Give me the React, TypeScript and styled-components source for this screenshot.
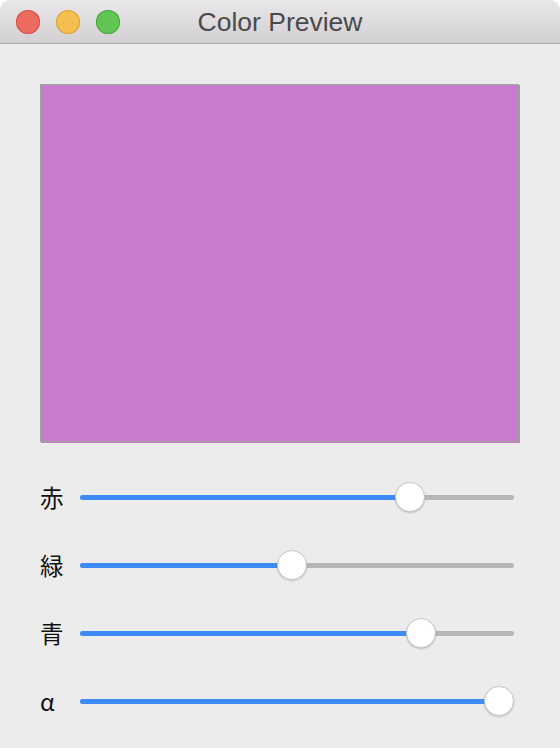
import React from "react";
import styled, { createGlobalStyle } from "styled-components";

const Global = createGlobalStyle`
  html, body { margin: 0; padding: 0; background: #ffffff; }
  body { font-family: "Liberation Sans", "Noto Sans CJK JP", sans-serif; }
`;

const Window = styled.div`
  width: 560px;
  height: 748px;
  display: flex;
  flex-direction: column;
  background: #ececec;
  border-radius: 10px 10px 0 0;
  overflow: hidden;
`;

const TitleBar = styled.div`
  height: 43px;
  flex: none;
  display: flex;
  align-items: center;
  position: relative;
  background: linear-gradient(#e9e7e9, #d2d0d2);
  border-bottom: 1px solid #ababab;
`;

const Lights = styled.div`
  display: flex;
  gap: 16px;
  padding-left: 16px;
  padding-top: 1px;
`;

const Light = styled.span<{ $fill: string; $edge: string }>`
  width: 24px;
  height: 24px;
  border-radius: 50%;
  background: ${(p) => p.$fill};
  box-shadow: inset 0 0 0 1px ${(p) => p.$edge};
`;

const Title = styled.div`
  position: absolute;
  left: 0;
  right: 0;
  top: 0;
  bottom: 0;
  display: flex;
  align-items: center;
  justify-content: center;
  padding-top: 1px;
  font-family: "Liberation Sans", sans-serif;
  font-size: 26.5px;
  color: #4a4a4a;
  pointer-events: none;
`;

const Content = styled.div`
  flex: 1;
  display: flex;
  flex-direction: column;
  padding: 40px 40px 0 40px;
`;

const Preview = styled.div<{ $color: string }>`
  height: 358px;
  box-sizing: border-box;
  width: 479px;
  background: ${(p) => p.$color};
  border: 1px solid #a3a3a3;
  box-shadow: 1px 1px 0 ${(p) => p.$color};
  margin-bottom: 21px;
`;

const Row = styled.div`
  height: 68px;
  display: flex;
  align-items: center;
  padding-right: 6px;
`;

const Label = styled.div`
  width: 40px;
  flex: none;
  font-family: "Noto Sans CJK JP", "Liberation Sans", sans-serif;
  font-size: 23.5px;
  color: #111;
  line-height: 1;
  padding-top: 2px;
`;

const Track = styled.div`
  flex: 1;
  height: 5px;
  border-radius: 3px;
  background: #b6b6b6;
  position: relative;
`;

const Fill = styled.div`
  position: absolute;
  left: 0;
  top: 0;
  bottom: 0;
  border-radius: 3px;
  background: #3c8bf6;
`;

const Thumb = styled.div`
  position: absolute;
  top: 50%;
  width: 30px;
  height: 30px;
  margin-left: -15px;
  margin-top: -15px;
  border-radius: 50%;
  background: #ffffff;
  box-sizing: border-box;
  border: 1px solid #c9c9c9;
  box-shadow: 0 1px 2px rgba(0, 0, 0, 0.2);
`;

const TRACK_W = 434;

function Slider({ label, value }: { label: string; value: number }) {
  const center = 15 + value * (TRACK_W - 30);
  return (
    <Row>
      <Label>{label}</Label>
      <Track>
        <Fill style={{ width: center }} />
        <Thumb style={{ left: center }} />
      </Track>
    </Row>
  );
}

export default function App() {
  const r = 199, g = 123, b = 204;
  const color = `rgb(${r}, ${g}, ${b})`;
  return (
    <>
      <Global />
      <Window>
        <TitleBar>
          <Lights>
            <Light $fill="#ec6a5e" $edge="#d25347" />
            <Light $fill="#f5bf4f" $edge="#d6a23b" />
            <Light $fill="#61c554" $edge="#4aa73d" />
          </Lights>
          <Title>Color Preview</Title>
        </TitleBar>
        <Content>
          <Preview $color={color} />
          <Slider label="赤" value={0.78} />
          <Slider label="緑" value={0.487} />
          <Slider label="青" value={0.808} />
          <Slider label="α" value={1} />
        </Content>
      </Window>
    </>
  );
}
